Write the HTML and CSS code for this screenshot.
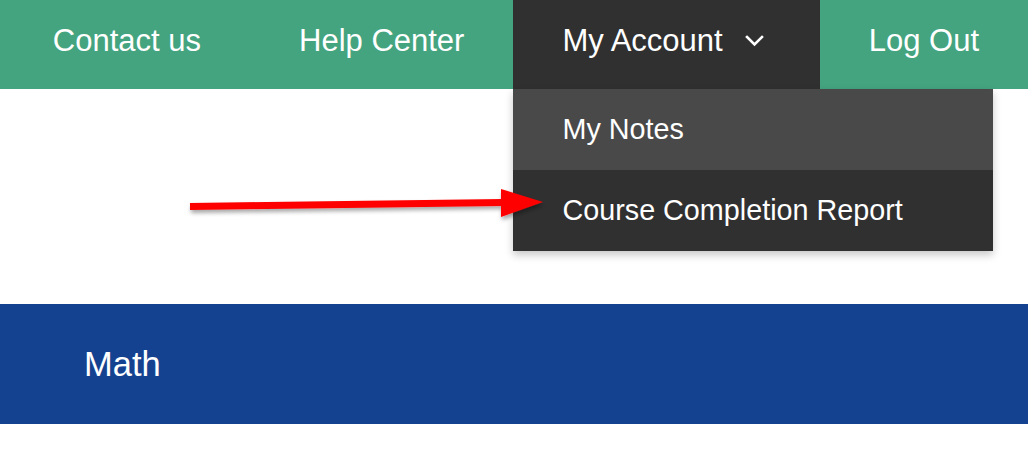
FILE: index.html
```html
<!DOCTYPE html>
<html>
<head>
<meta charset="utf-8">
<link rel="stylesheet" href="styles.css">
</head>
<body>
<header class="topbar">
  <nav class="nav">
    <a class="nav-item">Contact us</a>
    <a class="nav-item">Help Center</a>
    <div class="nav-item nav-account">
      <span>My Account</span>
      <svg class="chevron" width="20" height="14" viewBox="0 0 20 14">
        <polyline points="2,3 9.5,10.5 17,3" fill="none" stroke="#ffffff" stroke-width="2.6" stroke-linecap="square"/>
      </svg>
      <ul class="dropdown">
        <li class="dropdown-item dropdown-item-hover">My Notes</li>
        <li class="dropdown-item">Course Completion Report</li>
      </ul>
    </div>
    <a class="nav-item">Log Out</a>
  </nav>
</header>
<main class="content">
  <div class="spacer"></div>
  <section class="course-band">
    <h2 class="course-title">Math</h2>
  </section>
</main>
<svg class="annotation-arrow" width="380" height="50" viewBox="0 0 380 50">
  <defs>
    <filter id="sh" x="-10%" y="-50%" width="120%" height="200%">
      <feGaussianBlur in="SourceAlpha" stdDeviation="2"/>
      <feOffset dx="1" dy="3" result="b"/>
      <feComponentTransfer><feFuncA type="linear" slope="0.35"/></feComponentTransfer>
      <feMerge><feMergeNode/><feMergeNode in="SourceGraphic"/></feMerge>
    </filter>
  </defs>
  <g filter="url(#sh)">
    <line x1="12" y1="26.5" x2="325" y2="22.5" stroke="#ff0000" stroke-width="7"/>
    <polygon points="323,9 365,22 323,37" fill="#ff0000"/>
  </g>
</svg>
</body>
</html>
```
FILE: styles.css
```css
* { box-sizing: border-box; }
html, body {
  margin: 0;
  padding: 0;
  background: #ffffff;
  font-family: "Liberation Sans", Arial, sans-serif;
  width: 1028px;
  height: 465px;
  overflow: hidden;
  position: relative;
}
.topbar {
  background: #44a47f;
  height: 89px;
}
.nav {
  display: flex;
  justify-content: flex-end;
  height: 89px;
}
.nav-item {
  display: flex;
  align-items: center;
  padding: 0 49px 8px 49px;
  color: #ffffff;
  font-size: 31px;
  white-space: nowrap;
  text-decoration: none;
}
.nav-account {
  position: relative;
  background: #303030;
  gap: 22px;
  padding-right: 55px;
}
.chevron {
  display: block;
}
.dropdown {
  position: absolute;
  top: 89px;
  left: 0;
  width: 480px;
  margin: 0;
  padding: 0;
  list-style: none;
  background: #303030;
  box-shadow: 0 4px 8px rgba(0, 0, 0, 0.22);
  z-index: 5;
}
.dropdown-item {
  height: 81px;
  display: flex;
  align-items: center;
  padding-left: 49px;
  font-size: 28.75px;
  color: #ffffff;
}
.dropdown-item-hover {
  background: #494949;
}
.content {
  display: flex;
  flex-direction: column;
}
.spacer {
  height: 215px;
}
.course-band {
  background: #154290;
  height: 120px;
  display: flex;
  align-items: center;
  padding-left: 84px;
}
.course-title {
  margin: 0;
  font-weight: normal;
  font-size: 34.5px;
  color: #ffffff;
}
.annotation-arrow {
  position: absolute;
  left: 178px;
  top: 180px;
  z-index: 10;
}
```
